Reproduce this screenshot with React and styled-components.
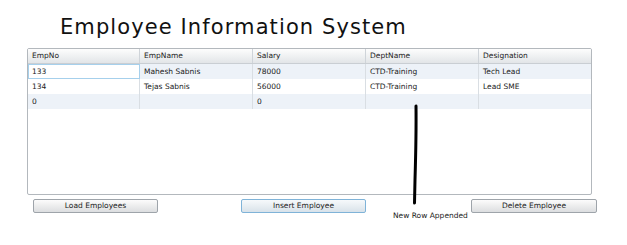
import styled, { createGlobalStyle, css } from "styled-components";

const GlobalStyle = createGlobalStyle`
  body {
    margin: 0;
    background: #ffffff;
    font-family: "DejaVu Sans", Verdana, sans-serif;
  }
`;

const Page = styled.div`
  position: relative;
  width: 627px;
  height: 245px;
  padding-top: 15px;
  box-sizing: border-box;
`;

const Title = styled.h1`
  margin: 0 0 9px 60px;
  font-size: 21px;
  line-height: 24px;
  font-weight: normal;
  letter-spacing: 1.1px;
  color: #111;
`;

const columns = "112px 113px 113px 113px 112px";

const Grid = styled.div`
  margin-left: 27px;
  width: 565px;
  height: 147px;
  box-sizing: border-box;
  border: 1px solid #b3b8bd;
  border-radius: 2px;
  overflow: hidden;
`;

const HeaderRow = styled.div`
  display: grid;
  grid-template-columns: ${columns};
  height: 15px;
  box-sizing: border-box;
  border-bottom: 1px solid #c9ced3;
  background: linear-gradient(#fdfdfd, #eef0f1 55%, #e2e5e8);
`;

const HeaderCell = styled.div`
  padding-left: 4px;
  font-size: 7.5px;
  line-height: 14px;
  color: #222;
  border-right: 1px solid #cfd4d9;
  white-space: nowrap;
  &:last-child {
    border-right: none;
  }
`;

const Row = styled.div`
  display: grid;
  grid-template-columns: ${columns};
  height: 15px;
  background: ${(p) => (p.$alt ? "#edf2f8" : "#ffffff")};
`;

const Cell = styled.div`
  padding-left: 4px;
  font-size: 7.5px;
  line-height: 15px;
  color: #1a1a1a;
  border-right: 1px solid #d9dee3;
  white-space: nowrap;
  box-sizing: border-box;
  &:last-child {
    border-right: none;
  }
  ${(p) =>
    p.$selected &&
    css`
      background: #ffffff;
      border: 1px solid #a6d0ec;
      padding-left: 3px;
      line-height: 13px;
    `}
`;

const ButtonBar = styled.div`
  display: flex;
  align-items: flex-start;
  margin-top: 4px;
  padding-left: 33px;
`;

const Button = styled.button`
  width: ${(p) => p.$w}px;
  height: 14px;
  margin: 0 0 0 ${(p) => p.$ml || 0}px;
  padding: 0;
  font-family: "DejaVu Sans", Verdana, sans-serif;
  font-size: 7.5px;
  line-height: 12px;
  color: #222;
  border: 1px solid #9ea4aa;
  border-radius: 2px;
  background: linear-gradient(#fcfcfc, #eceded 50%, #dcdee0);
  ${(p) =>
    p.$focus &&
    css`
      border-color: #7fb3d8;
      background: linear-gradient(#f6f9fb, #e8eef2 50%, #d8e2ea);
    `}
`;

const Note = styled.div`
  width: 105px;
  box-sizing: border-box;
  padding-left: 27px;
  margin-top: 13px;
  font-size: 7.5px;
  line-height: 8px;
  color: #222;
  white-space: nowrap;
`;

const Marker = styled.svg`
  position: absolute;
  left: 408px;
  top: 100px;
  pointer-events: none;
`;

const headers = ["EmpNo", "EmpName", "Salary", "DeptName", "Designation"];

const rows = [
  ["133", "Mahesh Sabnis", "78000", "CTD-Training", "Tech Lead"],
  ["134", "Tejas Sabnis", "56000", "CTD-Training", "Lead SME"],
  ["0", "", "0", "", ""],
];

export default function App() {
  return (
    <Page>
      <GlobalStyle />
      <Title>Employee Information System</Title>
      <Grid>
        <HeaderRow>
          {headers.map((h) => (
            <HeaderCell key={h}>{h}</HeaderCell>
          ))}
        </HeaderRow>
        {rows.map((r, i) => (
          <Row key={i} $alt={i % 2 === 0}>
            {r.map((v, j) => (
              <Cell key={j} $selected={i === 0 && j === 0}>
                {v}
              </Cell>
            ))}
          </Row>
        ))}
      </Grid>
      <ButtonBar>
        <Button $w={125}>Load Employees</Button>
        <Button $w={125} $ml={83} $focus>
          Insert Employee
        </Button>
        <Note>New Row Appended</Note>
        <Button $w={126}>Delete Employee</Button>
      </ButtonBar>
      <Marker width="14" height="108" viewBox="0 0 14 108">
        <path
          d="M8 6 C8.3 30 7.6 60 7 80 C6.8 90 6.6 97 6.5 103"
          stroke="#000"
          strokeWidth="3"
          strokeLinecap="round"
          fill="none"
        />
      </Marker>
    </Page>
  );
}
